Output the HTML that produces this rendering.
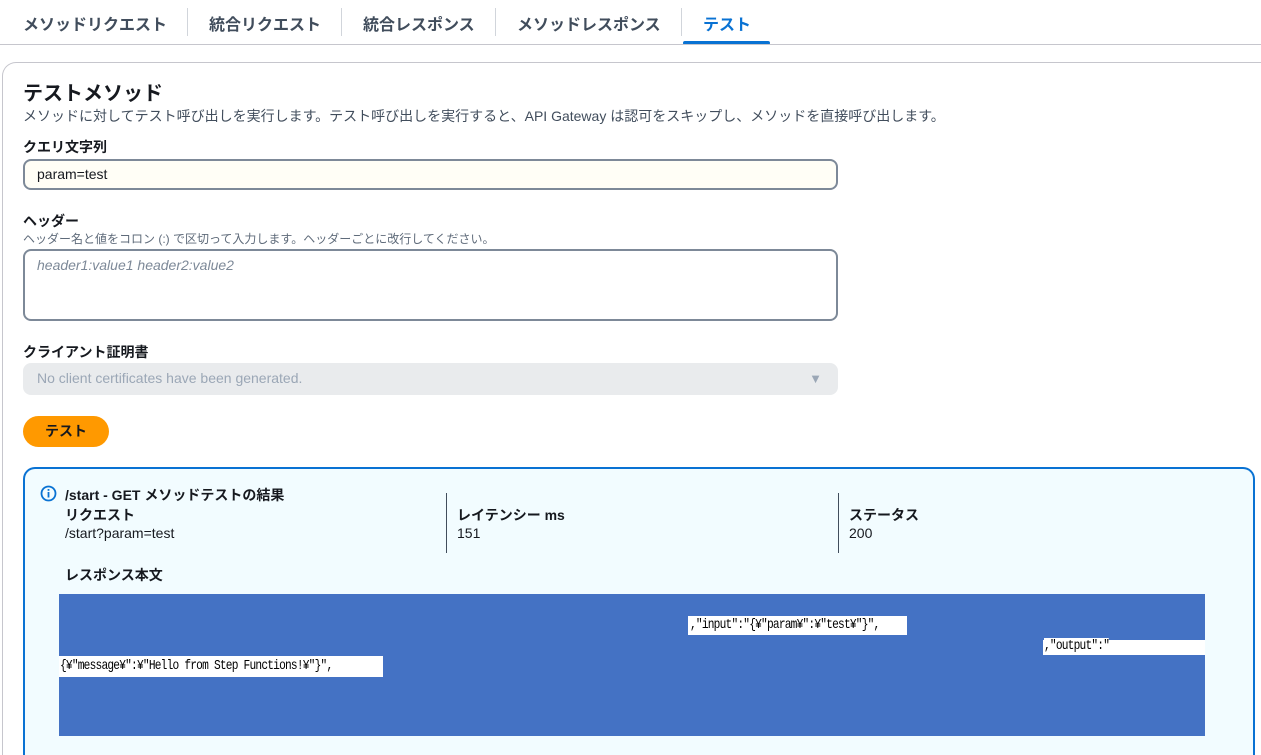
<!DOCTYPE html>
<html style="height:755px;overflow:hidden"><head><meta charset="utf-8"><style>
*{box-sizing:border-box;margin:0;padding:0}
body{width:1261px;height:755px;overflow:hidden;background:#fff;font-family:"Liberation Sans","Noto Sans CJK JP",sans-serif;color:#16191f;position:relative}
.a{position:absolute;white-space:nowrap}
.tab{font-size:16px;font-weight:bold;color:#414d5c;top:11px}
.sep{position:absolute;top:8px;width:1px;height:28px;background:#d1d5db}
.lbl{font-size:14px;font-weight:bold}
.mono{font-family:"Liberation Mono","Noto Sans CJK JP",monospace;font-size:14px;background:#fff;color:#000;position:absolute;white-space:nowrap;line-height:17px;letter-spacing:-1px;transform:scaleX(.8);transform-origin:left}
</style></head><body>
<div class="a tab" style="left:23px">メソッドリクエスト</div>
<div class="sep" style="left:187px"></div>
<div class="a tab" style="left:209px">統合リクエスト</div>
<div class="sep" style="left:341px"></div>
<div class="a tab" style="left:363px">統合レスポンス</div>
<div class="sep" style="left:495px"></div>
<div class="a tab" style="left:517px">メソッドレスポンス</div>
<div class="sep" style="left:681px"></div>
<div class="a tab" style="left:703px;color:#0972d3">テスト</div>
<div class="a" style="left:683px;top:41px;width:87px;height:4px;background:#0972d3;border-radius:2px"></div>
<div class="a" style="left:0;top:44px;width:1261px;height:1px;background:#c6c6cd"></div>
<div class="a" style="left:2px;top:62px;width:1259px;height:693px;border:1px solid #c6c6cd;border-right:none;border-bottom:none;border-radius:14px 0 0 0"></div>
<div class="a" style="left:23px;top:77px;font-size:20px;font-weight:bold">テストメソッド</div>
<div class="a" style="left:23px;top:106px;font-size:14px;color:#414d5c">メソッドに対してテスト呼び出しを実行します。テスト呼び出しを実行すると、API Gateway は認可をスキップし、メソッドを直接呼び出します。</div>
<div class="a lbl" style="left:23px;top:137px">クエリ文字列</div>
<div class="a" style="left:23px;top:159px;width:815px;height:31px;border:2px solid #7d8998;border-radius:8px;background:#fffef6;font-size:14px;padding:5px 12px">param=test</div>
<div class="a lbl" style="left:23px;top:211px">ヘッダー</div>
<div class="a" style="left:23px;top:230px;font-size:12px;color:#5f6b7a">ヘッダー名と値をコロン (:) で区切って入力します。ヘッダーごとに改行してください。</div>
<div class="a" style="left:23px;top:249px;width:815px;height:72px;border:2px solid #7d8998;border-radius:8px;font-size:14px;padding:6px 12px;color:#7d8998;font-style:italic">header1:value1 header2:value2</div>
<div class="a lbl" style="left:23px;top:342px">クライアント証明書</div>
<div class="a" style="left:23px;top:363px;width:815px;height:32px;border-radius:8px;background:#e9ebed;font-size:14px;padding:7px 14px;color:#9ba7b6">No client certificates have been generated.<span style="position:absolute;right:16px;top:8px;font-size:13px">▼</span></div>
<div class="a" style="left:23px;top:416px;width:86px;height:31px;border-radius:16px;background:#ff9900;font-size:14px;font-weight:bold;text-align:center;line-height:31px">テスト</div>
<div class="a" style="left:23px;top:467px;width:1232px;height:288px;border:2px solid #0972d3;border-bottom:none;border-radius:12px 12px 0 0;background:#f2fcff"></div>
<svg class="a" style="left:40px;top:485px" width="17" height="17" viewBox="0 0 17 17"><circle cx="8.5" cy="8.5" r="7" fill="none" stroke="#0972d3" stroke-width="1.8"/><rect x="7.6" y="7" width="1.8" height="5.5" fill="#0972d3"/><rect x="7.6" y="4" width="1.8" height="1.8" fill="#0972d3"/></svg>
<div class="a lbl" style="left:65px;top:485px">/start - GET メソッドテストの結果</div>
<div class="a lbl" style="left:65px;top:505px">リクエスト</div>
<div class="a" style="left:65px;top:525px;font-size:14px">/start?param=test</div>
<div class="a" style="left:446px;top:493px;width:1px;height:60px;background:#414d5c"></div>
<div class="a lbl" style="left:457px;top:505px">レイテンシー ms</div>
<div class="a" style="left:457px;top:525px;font-size:14px">151</div>
<div class="a" style="left:838px;top:493px;width:1px;height:60px;background:#414d5c"></div>
<div class="a lbl" style="left:849px;top:505px">ステータス</div>
<div class="a" style="left:849px;top:525px;font-size:14px">200</div>
<div class="a lbl" style="left:65px;top:565px">レスポンス本文</div>
<div class="a" style="left:59px;top:594px;width:1146px;height:142px;background:#4472c4"></div>
<div class="a" style="left:688px;top:616px;width:219px;height:19px;background:#fff"></div>
<div class="mono" style="left:690px;top:617px">,"input":"{¥"param¥":¥"test¥"}",</div>
<div class="a" style="left:1043px;top:640px;width:162px;height:15px;background:#fff"></div>
<div class="mono" style="left:1044px;top:638px">,"output":"</div>
<div class="a" style="left:59px;top:656px;width:324px;height:21px;background:#fff"></div>
<div class="mono" style="left:60px;top:658px">{¥"message¥":¥"Hello from Step Functions!¥"}",</div>
</body></html>
